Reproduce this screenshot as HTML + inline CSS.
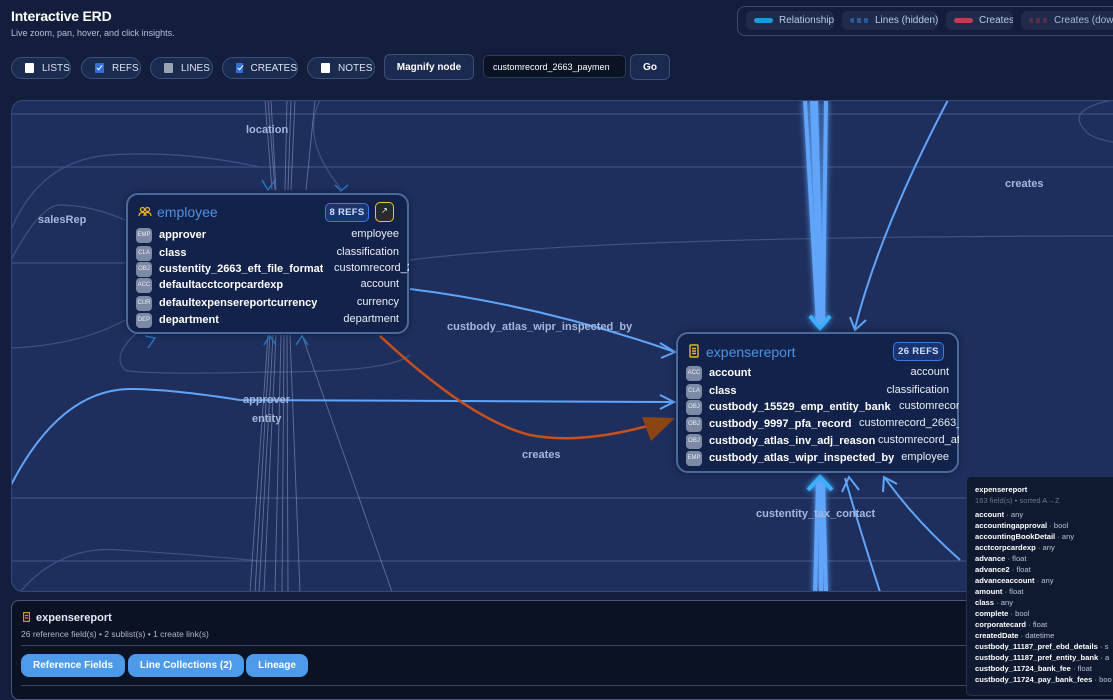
<!DOCTYPE html>
<html><head><meta charset="utf-8"><style>
*{box-sizing:border-box;margin:0;padding:0}
body{width:1113px;height:689px;overflow:hidden;background:#131e3d;font-family:"Liberation Sans",sans-serif;color:#e5e7eb;position:relative}
.abs{position:absolute}
h1{position:absolute;left:11px;top:8px;font-size:14px;font-weight:bold;color:#fff;letter-spacing:-0.2px}
.sub{left:11px;top:28px;font-size:9px;color:#b7c0d4}
.pill{position:absolute;top:57px;height:22px;border:1px solid #3b4f7a;border-radius:11px;background:#1b2a4f;font-size:10px;color:#dbe3f0;display:flex;align-items:center;padding-left:13px}
.cb{width:9px;height:10px;background:#fff;border-radius:1px;margin-right:8px;position:relative}
.cb.on{background:#2f6fe0}
.cb.on:after{content:"";position:absolute;left:3px;top:1px;width:2px;height:5px;border:solid #fff;border-width:0 1.5px 1.5px 0;transform:rotate(40deg)}
.cb.gr{background:#9aa3b2}
.btn{position:absolute;top:54px;height:26px;border:1px solid #3b4f7a;border-radius:6px;background:#1b2a4f;font-size:10px;font-weight:bold;color:#fff;display:flex;align-items:center;justify-content:center}
.legend{left:737px;top:6px;width:400px;height:30px;border:1px solid #3b4a6e;border-radius:8px}
.li{position:absolute;top:11px;height:19px;border-radius:6px;background:#1e2b4d;font-size:10px;color:#b8c8e8;display:flex;align-items:center;padding-left:8px;white-space:nowrap;overflow:hidden}
.sw{width:19px;height:5px;border-radius:3px;margin-right:6px;flex:none}
.canvas{left:11px;top:100px;width:1120px;height:492px;border:1px solid #34497c;border-radius:12px;background:#1e2f5e;overflow:hidden}
.node{position:absolute;border:2px solid #4a6a9e;border-radius:12px;background:#13224a;box-shadow:0 0 8px rgba(0,0,0,.4)}
.nt{position:absolute;font-size:14px;color:#4b93e6}
.refs{position:absolute;height:19px;border:1.5px solid #3a7ae0;border-radius:5px;background:#1a3470;color:#cfe0ff;font-size:9.5px;font-weight:bold;display:flex;align-items:center;justify-content:center;letter-spacing:.3px}
.row{position:absolute;left:8px;height:16px;font-size:11px;display:flex;align-items:center;white-space:nowrap;overflow:hidden}
.tag{width:16px;height:15px;border-radius:4px;background:#7c8aa6;color:#e8edf5;font-size:6px;display:flex;align-items:center;justify-content:center;margin-right:7px;flex:none}
.fn{font-weight:bold;color:#fff}
.ft{position:absolute;color:#e8edf5;font-size:11px}
.lbl{position:absolute;font-size:11px;color:#a3b8dd;font-weight:bold;white-space:nowrap}
.panel{left:11px;top:600px;width:1120px;height:100px;border:1px solid #4a5777;border-radius:8px;background:#0b1224}
.tb{position:absolute;top:53px;height:23px;border-radius:8px;background:#4c9ae8;color:#fff;font-size:10px;font-weight:bold;display:flex;align-items:center;justify-content:center}
.tip{left:966px;top:476px;width:160px;height:220px;background:#0f1a30;border:1px solid #26324d;border-radius:5px;font-size:7.6px;padding:7px 0 0 8px;line-height:11px;color:#b9c2d4}
.tip b{color:#fff}
</style></head><body>
<h1>Interactive ERD</h1>
<div class="abs sub">Live zoom, pan, hover, and click insights.</div>
<div class="pill" style="left:11px;width:60px"><span class="cb"></span>LISTS</div>
<div class="pill" style="left:81px;width:60px"><span class="cb on"></span>REFS</div>
<div class="pill" style="left:150px;width:63px"><span class="cb gr"></span>LINES</div>
<div class="pill" style="left:222px;width:76px"><span class="cb on"></span>CREATES</div>
<div class="pill" style="left:307px;width:68px"><span class="cb"></span>NOTES</div>
<div class="btn" style="left:384px;width:90px">Magnify node</div>
<div class="abs" style="left:483px;top:55px;width:143px;height:23px;border:1px solid #2c3a5a;border-radius:5px;background:#0b1224;font-size:9px;color:#fff;padding:6px 0 0 9px">customrecord_2663_paymen</div>
<div class="btn" style="left:630px;width:40px">Go</div>
<div class="abs legend"></div>
<div class="li" style="left:746px;width:88px"><span class="sw" style="background:#1c9ae0"></span>Relationship</div>
<div class="li" style="left:842px;width:96px"><span class="sw" style="background:repeating-linear-gradient(90deg,#2a5a96 0 4px,transparent 4px 7px)"></span>Lines (hidden)</div>
<div class="li" style="left:946px;width:67px"><span class="sw" style="background:#c23a4f"></span>Creates</div>
<div class="li" style="left:1021px;width:110px;color:#a9b6d6"><span class="sw" style="background:repeating-linear-gradient(90deg,#5a2c45 0 4px,transparent 4px 7px)"></span>Creates (down</div>

<div class="abs canvas">
<svg width="1113" height="689" style="position:absolute;left:-12px;top:-101px" viewBox="0 0 1113 689">
<defs><filter id="gl" x="-50%" y="-50%" width="200%" height="200%"><feGaussianBlur stdDeviation="3" result="b"/><feMerge><feMergeNode in="b"/><feMergeNode in="SourceGraphic"/></feMerge></filter></defs>
<g stroke="#3d5285" stroke-width="1.2" fill="none">
<path d="M11 114H1113"/><path d="M11 167H1113"/><path d="M11 263H125"/><path d="M410 260Q600 236 1113 236"/><path d="M11 498H1113"/><path d="M11 561H1113"/>
<path d="M11 230Q40 160 110 155Q180 150 260 167"/>
<path d="M11 260Q40 205 60 205Q90 205 125 220"/>
<path d="M11 348Q80 345 125 320"/>
<path d="M20 592Q60 545 120 550Q200 555 260 561"/>
<path d="M140 330Q110 355 125 370Q140 375 270 372Q390 372 410 355"/>
<path d="M320 100Q300 140 342 190"/>
<path d="M1113 100Q1060 110 1090 135Q1100 140 1113 142"/>
</g>
<g stroke="#8d9cc0" stroke-width="0.9" fill="none" opacity=".6">
<path d="M265 100L272 190"/><path d="M268 100L275 190"/><path d="M271 100L276 190"/><path d="M287 100L285 190"/><path d="M291 100L288 190"/><path d="M295 100L291 190"/><path d="M315 100L306 190"/>
<path d="M250 592L268 335"/><path d="M255 592L270 335"/><path d="M259 592L273 335"/><path d="M264 592L276 335"/><path d="M275 592L281 335"/><path d="M282 592L284 335"/><path d="M288 592L287 335"/><path d="M300 592L290 335"/><path d="M392 592L302 335"/>
</g>
<g stroke="#2a75c0" stroke-width="1.5" fill="none"><path d="M262 180L268 190L275 180"/><path d="M335 185L341 191L348 185"/><path d="M264 345L270 336L276 345"/><path d="M296 345L302 336L308 345"/><path d="M148 348L155 338L145 336"/></g>
<g filter="url(#gl)" fill="none">
<path d="M805 100L818 325M812 100L820 325M816 100L822 325M826 100L823 325" stroke="#60a5fa" stroke-width="4"/>
<path d="M810 316L820 328L830 316" stroke="#3ab0ff" stroke-width="4"/>
<path d="M815 592L818 480M821 592L821 480M826 592L823 480" stroke="#60a5fa" stroke-width="4"/>
<path d="M808 490L820 477L832 490" stroke="#3ab0ff" stroke-width="4"/>
</g>
<g stroke="#60a5fa" stroke-width="2" fill="none">
<path d="M948 100Q880 230 855 328"/><path d="M850 317L855 330L866 320"/>
<path d="M11 485Q60 390 130 389Q170 389 240 400L675 402"/><path d="M660 395L674 402L660 409"/>
<path d="M410 289Q540 305 675 352"/><path d="M660 343L675 352L661 358"/>
<path d="M845 478Q860 530 880 592"/><path d="M842 492L849 477L859 490"/>
<path d="M960 560Q915 520 885 478"/><path d="M883 492L884 477L897 484"/>
</g>
<path d="M380 336Q470 420 530 435Q580 445 655 424" stroke="#c94f1c" stroke-width="2.5" fill="none"/>
<path d="M642 417L675 418L651 441Z" fill="#8b4513"/>
</svg>
<div class="lbl" style="left:234px;top:23px">location</div>
<div class="lbl" style="left:26px;top:113px">salesRep</div>
<div class="lbl" style="left:993px;top:77px">creates</div>
<div class="lbl" style="left:435px;top:220px">custbody_atlas_wipr_inspected_by</div>
<div class="lbl" style="left:231px;top:293px">approver</div>
<div class="lbl" style="left:240px;top:312px">entity</div>
<div class="lbl" style="left:510px;top:348px">creates</div>
<div class="lbl" style="left:744px;top:407px">custentity_tax_contact</div>

<div class="node" style="left:114px;top:92px;width:283px;height:141px">
<svg class="abs" style="left:10px;top:11px" width="14" height="12" viewBox="0 0 14 12" fill="none" stroke="#e8b423" stroke-width="1.3"><circle cx="4.5" cy="3.5" r="2"/><circle cx="9.5" cy="3.5" r="2"/><path d="M1 10Q1 6.5 4.5 6.5Q8 6.5 8 10M6 10Q6 6.5 9.5 6.5Q13 6.5 13 10"/></svg>
<div class="nt" style="left:29px;top:9px">employee</div>
<div class="refs" style="left:197px;top:8px;width:44px">8 REFS</div>
<div class="abs" style="left:247px;top:7px;width:19px;height:20px;border:1.5px solid #e8c630;border-radius:5px;background:#262b2e;color:#fff;font-size:8px;text-align:center;line-height:16px">↗</div>
<div class="row" style="top:32px"><span class="tag">EMP</span><span class="fn">approver</span></div><div class="ft" style="right:8px;top:33px">employee</div>
<div class="row" style="top:50px"><span class="tag">CLA</span><span class="fn">class</span></div><div class="ft" style="right:8px;top:51px">classification</div>
<div class="row" style="top:66px"><span class="tag">OBJ</span><span class="fn">custentity_2663_eft_file_format</span></div><div class="ft" style="left:206px;top:67px;width:75px;overflow:hidden;white-space:nowrap">customrecord_2</div>
<div class="row" style="top:82px"><span class="tag">ACC</span><span class="fn">defaultacctcorpcardexp</span></div><div class="ft" style="right:8px;top:83px">account</div>
<div class="row" style="top:100px"><span class="tag">CUR</span><span class="fn">defaultexpensereportcurrency</span></div><div class="ft" style="right:8px;top:101px">currency</div>
<div class="row" style="top:117px"><span class="tag">DEP</span><span class="fn">department</span></div><div class="ft" style="right:8px;top:118px">department</div>
</div>

<div class="node" style="left:664px;top:231px;width:283px;height:141px">
<svg class="abs" style="left:11px;top:10px" width="10" height="14" viewBox="0 0 10 14" fill="none" stroke="#e8b423" stroke-width="1.4"><rect x="1" y="1" width="8" height="12" rx="1"/><path d="M3 4.5H7M3 7H7M3 9.5H7"/></svg>
<div class="nt" style="left:28px;top:10px">expensereport</div>
<div class="refs" style="left:215px;top:8px;width:51px">26 REFS</div>
<div class="row" style="top:31px"><span class="tag">ACC</span><span class="fn">account</span></div><div class="ft" style="right:8px;top:32px">account</div>
<div class="row" style="top:49px"><span class="tag">CLA</span><span class="fn">class</span></div><div class="ft" style="right:8px;top:50px">classification</div>
<div class="row" style="top:65px"><span class="tag">OBJ</span><span class="fn">custbody_15529_emp_entity_bank</span></div><div class="ft" style="left:221px;top:66px;width:60px;overflow:hidden;white-space:nowrap">customrecord</div>
<div class="row" style="top:82px"><span class="tag">OBJ</span><span class="fn">custbody_9997_pfa_record</span></div><div class="ft" style="left:181px;top:83px;width:100px;overflow:hidden;white-space:nowrap">customrecord_2663_</div>
<div class="row" style="top:99px"><span class="tag">OBJ</span><span class="fn">custbody_atlas_inv_adj_reason</span></div><div class="ft" style="left:200px;top:100px;width:81px;overflow:hidden;white-space:nowrap">customrecord_at</div>
<div class="row" style="top:116px"><span class="tag">EMP</span><span class="fn">custbody_atlas_wipr_inspected_by</span></div><div class="ft" style="right:8px;top:117px">employee</div>
</div>
</div>

<div class="abs panel">
<svg class="abs" style="left:11px;top:11px" width="7" height="10" viewBox="0 0 7 10" fill="none" stroke="#c99a1f" stroke-width="1.2"><rect x=".6" y=".6" width="5.8" height="8.8"/><path d="M2 3.5H5M2 6H5"/></svg>
<div class="abs" style="left:24px;top:11px;font-size:11px;font-weight:bold;color:#e5ebf5">expensereport</div>
<div class="abs" style="left:9px;top:28px;font-size:8.5px;color:#b0b8c8">26 reference field(s) • 2 sublist(s) • 1 create link(s)</div>
<div class="abs" style="left:9px;top:44px;width:1100px;height:1px;background:#3a4560"></div>
<div class="tb" style="left:9px;width:104px">Reference Fields</div>
<div class="tb" style="left:116px;width:116px">Line Collections (2)</div>
<div class="tb" style="left:234px;width:62px">Lineage</div>
<div class="abs" style="left:9px;top:84px;width:1100px;height:1px;background:#3a4560"></div>
</div>

<div class="abs tip">
<b>expensereport</b><br><span style="color:#6b768c">163 field(s) • sorted A→Z</span><br>
<div style="margin-top:3px"><b>account</b> · any<br><b>accountingapproval</b> · bool<br><b>accountingBookDetail</b> · any<br><b>acctcorpcardexp</b> · any<br><b>advance</b> · float<br><b>advance2</b> · float<br><b>advanceaccount</b> · any<br><b>amount</b> · float<br><b>class</b> · any<br><b>complete</b> · bool<br><b>corporatecard</b> · float<br><b>createdDate</b> · datetime<br><b>custbody_11187_pref_ebd_details</b> · s<br><b>custbody_11187_pref_entity_bank</b> · a<br><b>custbody_11724_bank_fee</b> · float<br><b>custbody_11724_pay_bank_fees</b> · boo</div>
</div>
</body></html>
